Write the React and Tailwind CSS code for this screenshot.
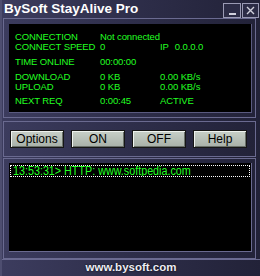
import React from "react";

const Row = ({ a, b, c, className = "" }) => (
  <div className={"flex h-[10px] leading-[10px] " + className}>
    <div className="w-[85px] shrink-0 whitespace-nowrap">{a}</div>
    <div className="w-[60px] shrink-0 whitespace-nowrap">{b}</div>
    <div className="flex-1 whitespace-nowrap">{c}</div>
  </div>
);

const Btn = ({ children }) => (
  <div className="w-[54px] h-[18px] flex items-center justify-center border border-[#161616] bg-gradient-to-b from-[#c8d0c8] to-[#a8b0a8] shadow-[inset_1px_1px_0_#eef2ee,inset_-1px_-1px_0_#6a706a] text-[12px] leading-none text-black font-['Liberation_Sans',Arial,sans-serif]">
    {children}
  </div>
);

export default function App() {
  return (
    <div className="w-[260px] h-[276px] flex flex-col overflow-hidden bg-gradient-to-r from-[#3c3c5e] via-[#2e2e4a] to-[#222238] border-l-[2px] border-[#4e4e70] font-['Liberation_Sans',Arial,sans-serif]">
      {/* title bar */}
      <div className="h-[18px] shrink-0 flex items-start justify-between pl-[2px] pr-[1px] pt-[1px]">
        <div className="text-[13.5px] font-bold text-white leading-[16px]">
          BySoft StayAlive Pro
        </div>
        <div className="flex gap-[1px] pt-[2px]">
          <div className="w-[18px] h-[15px] border border-[#9a9ab4] bg-[#2c2c46] flex items-end justify-center pb-[2px]">
            <div className="w-[7px] h-[2px] bg-[#d0d0dc]" />
          </div>
          <div className="w-[17px] h-[15px] border border-[#9a9ab4] bg-[#2c2c46] flex items-center justify-center">
            <svg width="9" height="9" viewBox="0 0 9 9">
              <path d="M1 1L8 8M8 1L1 8" stroke="#d0d0dc" strokeWidth="1.4" />
            </svg>
          </div>
        </div>
      </div>

      {/* status panel */}
      <div className="ml-[1px] mr-[4px] h-[100px] shrink-0 border border-[#6a6a90] pt-[5px] pl-[5px] pr-[3px] pb-[4px]">
        <div className="h-full bg-black pt-[8px] pl-[6px] text-[9.5px] text-[#22ff22] tracking-[-0.1px] border-b border-r border-[#5a5a80]">
          <Row a="CONNECTION" b="Not connected" c="" />
          <Row
            a="CONNECT SPEED"
            b="0"
            c={
              <span className="flex gap-[6px]">
                <span>IP</span>
                <span>0.0.0.0</span>
              </span>
            }
          />
          <Row className="mt-[5px]" a="TIME ONLINE" b="00:00:00" c="" />
          <Row className="mt-[5px]" a="DOWNLOAD" b="0  KB" c="0.00 KB/s" />
          <Row a="UPLOAD" b="0  KB" c="0.00 KB/s" />
          <Row className="mt-[4px]" a="NEXT REQ" b="0:00:45" c="ACTIVE" />
        </div>
      </div>

      {/* buttons panel */}
      <div className="ml-[1px] mr-[4px] mt-[3px] h-[36px] shrink-0 border border-[#6a6a90] flex items-center pl-[6px] gap-[7px]">
        <Btn>Options</Btn>
        <Btn>ON</Btn>
        <Btn>OFF</Btn>
        <Btn>Help</Btn>
      </div>

      {/* log panel */}
      <div className="ml-[1px] mr-[4px] mt-[1px] h-[101px] shrink-0 border border-[#6a6a90] pt-[4px] pl-[5px] pr-[3px] pb-[6px]">
        <div className="h-full bg-black pt-[2px] pl-[1px] pr-[1px] border-b border-r border-[#6a6a90]">
          <div className="h-[12px] border border-dotted border-white flex items-center pl-[2px] overflow-hidden">
            <span className="inline-block origin-left scale-x-[0.86] whitespace-nowrap text-[12.5px] leading-none text-[#22ff22]">
              13:53:31&gt; HTTP: www.softpedia.com
            </span>
          </div>
        </div>
      </div>

      {/* footer */}
      <div className="flex-1 border-t border-[#6a6a90] flex items-center justify-center">
        <span className="text-[11.5px] font-bold text-[#ececf4] leading-none [text-shadow:0_0_2px_#000]">
          www.bysoft.com
        </span>
      </div>
    </div>
  );
}
